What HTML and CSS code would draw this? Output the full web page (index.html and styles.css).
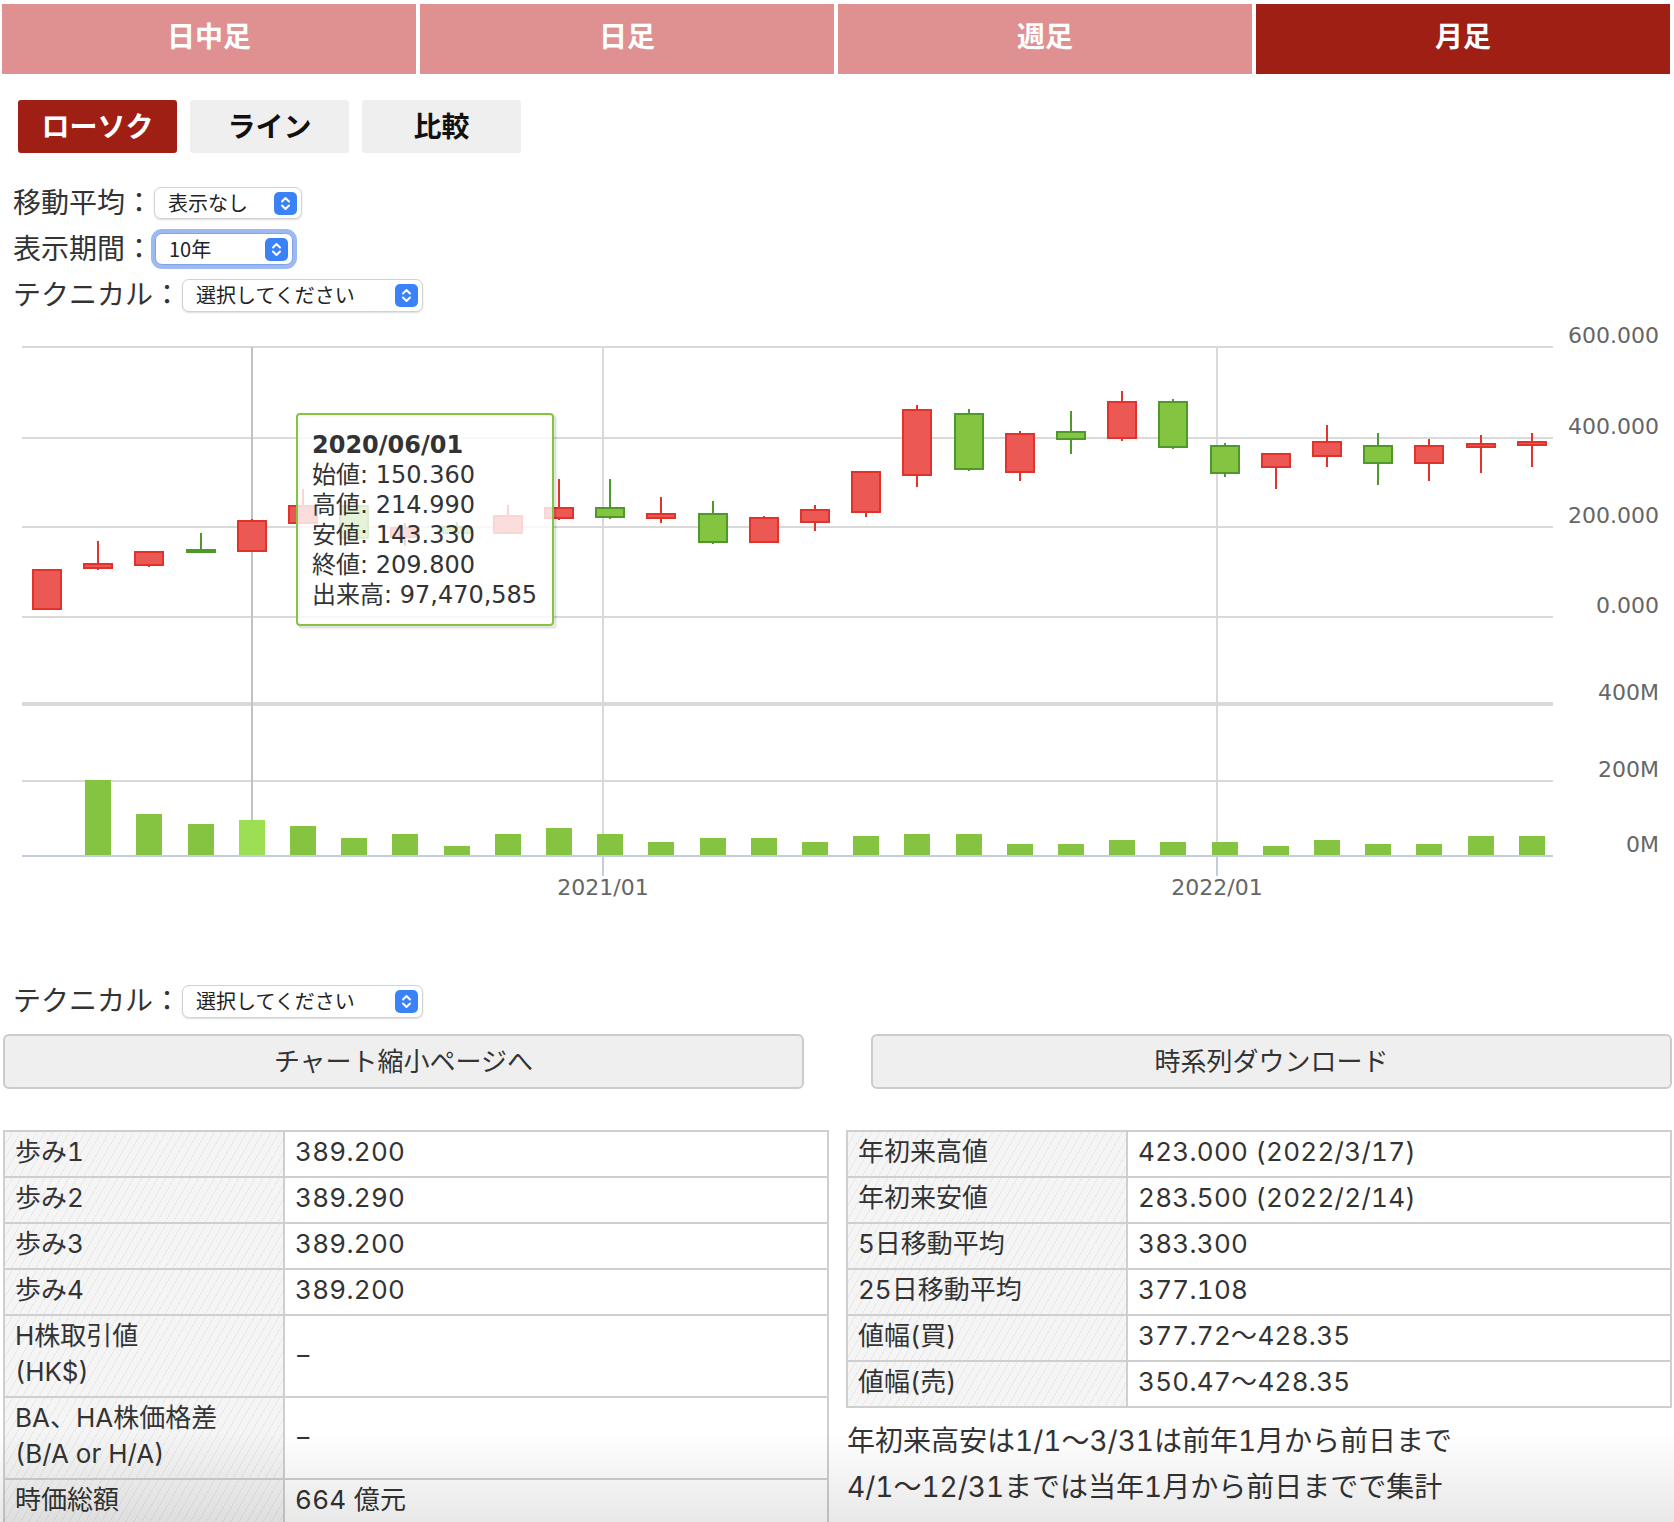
FILE: index.html
```html
<!DOCTYPE html>
<html lang="ja">
<head>
<meta charset="utf-8">
<title>チャート</title>
<link rel="stylesheet" href="styles.css">
</head>
<body>
<nav class="period-tabs">
  <div class="period-tab">日中足</div>
  <div class="period-tab">日足</div>
  <div class="period-tab">週足</div>
  <div class="period-tab active">月足</div>
</nav>

<div class="chart-types">
  <div class="chart-type active">ローソク</div>
  <div class="chart-type">ライン</div>
  <div class="chart-type">比較</div>
</div>

<div class="controls top">
  <div class="control-row">
    <span class="control-label">移動平均：</span>
    <span class="select w-ma"><span class="select-text">表示なし</span><svg class="select-arrow" width="23" height="23" viewBox="0 0 23 23"><rect width="23" height="23" rx="5" fill="#3b82f6"/><path d="M8 9.5 11.5 6 15 9.5M8 13.5 11.5 17 15 13.5" fill="none" stroke="#fff" stroke-width="2" stroke-linecap="round" stroke-linejoin="round"/></svg></span>
  </div>
  <div class="control-row">
    <span class="control-label">表示期間：</span>
    <span class="select w-period focused"><span class="select-text">10年</span><svg class="select-arrow" width="23" height="23" viewBox="0 0 23 23"><rect width="23" height="23" rx="5" fill="#3b82f6"/><path d="M8 9.5 11.5 6 15 9.5M8 13.5 11.5 17 15 13.5" fill="none" stroke="#fff" stroke-width="2" stroke-linecap="round" stroke-linejoin="round"/></svg></span>
  </div>
  <div class="control-row">
    <span class="control-label">テクニカル：</span>
    <span class="select w-tech"><span class="select-text">選択してください</span><svg class="select-arrow" width="23" height="23" viewBox="0 0 23 23"><rect width="23" height="23" rx="5" fill="#3b82f6"/><path d="M8 9.5 11.5 6 15 9.5M8 13.5 11.5 17 15 13.5" fill="none" stroke="#fff" stroke-width="2" stroke-linecap="round" stroke-linejoin="round"/></svg></span>
  </div>
</div>

<svg class="chart" viewBox="0 318 1674 660" width="1674" height="660">
  <g class="grid">
    <line x1="22" y1="347" x2="1553" y2="347"/>
    <line x1="22" y1="438" x2="1553" y2="438"/>
    <line x1="22" y1="527" x2="1553" y2="527"/>
    <line x1="22" y1="617" x2="1553" y2="617"/>
    <line x1="22" y1="781" x2="1553" y2="781"/>
    <line class="thick" x1="22" y1="704" x2="1553" y2="704"/>
    <line x1="603" y1="347" x2="603" y2="856"/>
    <line x1="1217" y1="347" x2="1217" y2="856"/>
  </g>
  <line class="crosshair" x1="252" y1="347" x2="252" y2="856"/>
  <g class="axis-line">
    <line x1="22" y1="856" x2="1553" y2="856"/>
    <line x1="603" y1="856" x2="603" y2="876"/>
    <line x1="1217" y1="856" x2="1217" y2="876"/>
  </g>

  <g class="vol">
    <rect x="85" y="780" width="26" height="75"/>
    <rect x="136" y="814" width="26" height="41"/>
    <rect x="188" y="824" width="26" height="31"/>
    <rect class="hover" x="239" y="820" width="26" height="35"/>
    <rect x="290" y="826" width="26" height="29"/>
    <rect x="341" y="838" width="26" height="17"/>
    <rect x="392" y="834" width="26" height="21"/>
    <rect x="444" y="846" width="26" height="9"/>
    <rect x="495" y="834" width="26" height="21"/>
    <rect x="546" y="828" width="26" height="27"/>
    <rect x="597" y="834" width="26" height="21"/>
    <rect x="648" y="842" width="26" height="13"/>
    <rect x="700" y="838" width="26" height="17"/>
    <rect x="751" y="838" width="26" height="17"/>
    <rect x="802" y="842" width="26" height="13"/>
    <rect x="853" y="836" width="26" height="19"/>
    <rect x="904" y="834" width="26" height="21"/>
    <rect x="956" y="834" width="26" height="21"/>
    <rect x="1007" y="844" width="26" height="11"/>
    <rect x="1058" y="844" width="26" height="11"/>
    <rect x="1109" y="840" width="26" height="15"/>
    <rect x="1160" y="842" width="26" height="13"/>
    <rect x="1212" y="842" width="26" height="13"/>
    <rect x="1263" y="846" width="26" height="9"/>
    <rect x="1314" y="840" width="26" height="15"/>
    <rect x="1365" y="844" width="26" height="11"/>
    <rect x="1416" y="844" width="26" height="11"/>
    <rect x="1468" y="836" width="26" height="19"/>
    <rect x="1519" y="836" width="26" height="19"/>
  </g>

  <g class="candles">
    <rect class="up" x="33" y="570" width="28" height="39"/>
    <line class="wu" x1="98" y1="541" x2="98" y2="570"/><rect class="up" x="84" y="564" width="28" height="4"/>
    <line class="wu" x1="149" y1="552" x2="149" y2="567"/><rect class="up" x="135" y="552" width="28" height="13"/>
    <line class="wd" x1="201" y1="533" x2="201" y2="552"/><rect class="dn" x="187" y="550" width="28" height="2"/>
    <line class="wu" x1="252" y1="519" x2="252" y2="552"/><rect class="up" x="238" y="521" width="28" height="30"/>
    <line class="wu" x1="303" y1="489" x2="303" y2="523"/><rect class="up" x="289" y="506" width="28" height="17"/>
    <line class="wd" x1="354" y1="504" x2="354" y2="540"/><rect class="dn" x="340" y="506" width="28" height="32"/>
    <line class="wu" x1="405" y1="523" x2="405" y2="546"/><rect class="up" x="391" y="528" width="28" height="9"/>
    <line class="wd" x1="457" y1="522" x2="457" y2="535"/><rect class="dn" x="443" y="527" width="28" height="6"/>
    <line class="wu" x1="508" y1="505" x2="508" y2="533"/><rect class="up" x="494" y="516" width="28" height="17"/>
    <line class="wu" x1="559" y1="479" x2="559" y2="520"/><rect class="up" x="545" y="508" width="28" height="10"/>
    <line class="wd" x1="610" y1="479" x2="610" y2="519"/><rect class="dn" x="596" y="508" width="28" height="9"/>
    <line class="wu" x1="661" y1="497" x2="661" y2="523"/><rect class="up" x="647" y="514" width="28" height="4"/>
    <line class="wd" x1="713" y1="501" x2="713" y2="544"/><rect class="dn" x="699" y="514" width="28" height="28"/>
    <line class="wu" x1="764" y1="516" x2="764" y2="542"/><rect class="up" x="750" y="518" width="28" height="24"/>
    <line class="wu" x1="815" y1="505" x2="815" y2="531"/><rect class="up" x="801" y="510" width="28" height="12"/>
    <line class="wu" x1="866" y1="472" x2="866" y2="517"/><rect class="up" x="852" y="472" width="28" height="40"/>
    <line class="wu" x1="917" y1="405" x2="917" y2="487"/><rect class="up" x="903" y="410" width="28" height="65"/>
    <line class="wd" x1="969" y1="409" x2="969" y2="471"/><rect class="dn" x="955" y="414" width="28" height="55"/>
    <line class="wu" x1="1020" y1="431" x2="1020" y2="481"/><rect class="up" x="1006" y="434" width="28" height="38"/>
    <line class="wd" x1="1071" y1="411" x2="1071" y2="454"/><rect class="dn" x="1057" y="432" width="28" height="7"/>
    <line class="wu" x1="1122" y1="391" x2="1122" y2="441"/><rect class="up" x="1108" y="402" width="28" height="36"/>
    <line class="wd" x1="1173" y1="399" x2="1173" y2="449"/><rect class="dn" x="1159" y="402" width="28" height="45"/>
    <line class="wd" x1="1225" y1="443" x2="1225" y2="477"/><rect class="dn" x="1211" y="446" width="28" height="27"/>
    <line class="wu" x1="1276" y1="454" x2="1276" y2="489"/><rect class="up" x="1262" y="454" width="28" height="13"/>
    <line class="wu" x1="1327" y1="425" x2="1327" y2="467"/><rect class="up" x="1313" y="442" width="28" height="14"/>
    <line class="wd" x1="1378" y1="433" x2="1378" y2="485"/><rect class="dn" x="1364" y="446" width="28" height="17"/>
    <line class="wu" x1="1429" y1="439" x2="1429" y2="481"/><rect class="up" x="1415" y="446" width="28" height="17"/>
    <line class="wu" x1="1481" y1="435" x2="1481" y2="473"/><rect class="up" x="1467" y="444" width="28" height="3"/>
    <line class="wu" x1="1532" y1="433" x2="1532" y2="467"/><rect class="up" x="1518" y="442" width="28" height="3"/>
  </g>

  <g class="axis-text">
    <text class="yl" x="1659" y="343">600.000</text>
    <text class="yl" x="1659" y="434">400.000</text>
    <text class="yl" x="1659" y="523">200.000</text>
    <text class="yl" x="1659" y="613">0.000</text>
    <text class="yl" x="1659" y="700">400M</text>
    <text class="yl" x="1659" y="777">200M</text>
    <text class="yl" x="1659" y="852">0M</text>
    <text class="xl" x="603" y="895">2021/01</text>
    <text class="xl" x="1217" y="895">2022/01</text>
  </g>

  <g class="tooltip">
    <rect class="tt-shadow" x="300" y="417" width="256" height="211" rx="3"/>
    <rect class="tt-shadow2" x="299" y="416" width="256" height="211" rx="3"/>
    <rect class="tt-box" x="297" y="414" width="256" height="211" rx="3"/>
    <text class="tt-title" x="312" y="453">2020/06/01</text>
    <text class="tt-line" x="312" y="483">始値: 150.360</text>
    <text class="tt-line" x="312" y="513">高値: 214.990</text>
    <text class="tt-line" x="312" y="543">安値: 143.330</text>
    <text class="tt-line" x="312" y="573">終値: 209.800</text>
    <text class="tt-line" x="312" y="603">出来高: 97,470,585</text>
  </g>
</svg>

<div class="controls bottom">
  <div class="control-row">
    <span class="control-label">テクニカル：</span>
    <span class="select w-tech"><span class="select-text">選択してください</span><svg class="select-arrow" width="23" height="23" viewBox="0 0 23 23"><rect width="23" height="23" rx="5" fill="#3b82f6"/><path d="M8 9.5 11.5 6 15 9.5M8 13.5 11.5 17 15 13.5" fill="none" stroke="#fff" stroke-width="2" stroke-linecap="round" stroke-linejoin="round"/></svg></span>
  </div>
</div>

<div class="action-row">
  <div class="action-btn">チャート縮小ページへ</div>
  <div class="action-btn">時系列ダウンロード</div>
</div>

<div class="tables">
  <table class="info">
    <tr><th>歩み1</th><td>389.200</td></tr>
    <tr><th>歩み2</th><td>389.290</td></tr>
    <tr><th>歩み3</th><td>389.200</td></tr>
    <tr><th>歩み4</th><td>389.200</td></tr>
    <tr><th><span class="line">H株取引値</span><span class="line">(HK$)</span></th><td class="dash">--</td></tr>
    <tr><th><span class="line">BA、HA株価格差</span><span class="line">(B/A or H/A)</span></th><td class="dash">--</td></tr>
    <tr><th>時価総額</th><td>664 億元</td></tr>
  </table>
  <div class="right-col">
    <table class="info">
      <tr><th>年初来高値</th><td>423.000 (2022/3/17)</td></tr>
      <tr><th>年初来安値</th><td>283.500 (2022/2/14)</td></tr>
      <tr><th>5日移動平均</th><td>383.300</td></tr>
      <tr><th>25日移動平均</th><td>377.108</td></tr>
      <tr><th>値幅(買)</th><td>377.72〜428.35</td></tr>
      <tr><th>値幅(売)</th><td>350.47〜428.35</td></tr>
    </table>
    <p class="note"><span class="line">年初来高安は1/1〜3/31は前年1月から前日まで</span><span class="line">4/1〜12/31までは当年1月から前日までで集計</span></p>
  </div>
</div>

<div class="bottom-fade"></div>
</body>
</html>
```

FILE: styles.css
```css
html, body {
  margin: 0;
  padding: 0;
  background: #fff;
}
body {
  font-family: "Noto Sans CJK JP", "Noto Sans", sans-serif;
  color: #333;
  width: 1674px;
  padding-bottom: 200px;
}

/* period tabs */
.period-tabs {
  display: flex;
  gap: 4px;
  padding: 4px 4px 0 2px;
}
.period-tab {
  flex: 1;
  height: 70px;
  box-sizing: border-box;
  padding-bottom: 9px;
  display: flex;
  align-items: center;
  justify-content: center;
  background: #df9191;
  color: #fff;
  font-weight: bold;
  font-size: 28px;
}
.period-tab.active {
  background: #9f1f15;
}

/* chart type buttons */
.chart-types {
  display: flex;
  gap: 13px;
  padding: 26px 0 0 18px;
}
.chart-type {
  width: 159px;
  height: 53px;
  box-sizing: border-box;
  padding-bottom: 4px;
  border-radius: 3px;
  background: #efefef;
  color: #111;
  font-size: 28px;
  font-weight: bold;
  display: flex;
  align-items: center;
  justify-content: center;
}
.chart-type.active {
  background: #9f1f15;
  color: #fff;
}

/* controls */
.controls {
  padding-left: 13px;
}
.controls.top {
  padding-top: 27px;
}
.control-row {
  height: 46px;
  display: flex;
  align-items: center;
}
.control-label {
  font-size: 28px;
  line-height: 1;
  color: #333;
  margin-bottom: 4px;
}
.select {
  display: flex;
  align-items: center;
  justify-content: space-between;
  box-sizing: border-box;
  height: 32px;
  padding: 0 4px 0 13px;
  margin-left: 1px;
  border: 1px solid #d2d2d2;
  border-radius: 7px;
  background: #fff;
  box-shadow: 0 1px 2px rgba(0, 0, 0, 0.14);
  font-size: 20px;
  color: #222;
}
.select-text {
  line-height: 1;
}
.select-arrow {
  flex: none;
  display: block;
}
.w-ma { width: 148px; }
.w-period { width: 138px; margin-left: 2px; }
.w-tech { width: 241px; height: 33px; }
.select.focused {
  box-shadow: 0 0 0 4px #9db9f2;
  border-color: #7fa4ee;
}

/* chart */
.chart {
  display: block;
  width: 1674px;
  height: 660px;
}
.grid line {
  stroke: #d9d9d9;
  stroke-width: 2;
}
.grid line.thick {
  stroke-width: 4;
}
.crosshair {
  stroke: #c2c2c2;
  stroke-width: 2;
}
.axis-line line {
  stroke: #c3cde0;
  stroke-width: 2;
}
.vol rect {
  fill: #84c441;
}
.vol rect.hover {
  fill: #9ddf52;
}
.candles .up {
  fill: #ec5853;
  stroke: #e1322b;
  stroke-width: 2;
}
.candles .dn {
  fill: #84c441;
  stroke: #4d9a2a;
  stroke-width: 2;
}
.candles .wu {
  stroke: #e1322b;
  stroke-width: 2;
}
.candles .wd {
  stroke: #4d9a2a;
  stroke-width: 2;
}
.axis-text text {
  font-family: "DejaVu Sans", "Noto Sans CJK JP", sans-serif;
  font-size: 22px;
  fill: #666;
}
.axis-text .yl {
  text-anchor: end;
}
.axis-text .xl {
  text-anchor: middle;
}
.tt-shadow {
  fill: none;
  stroke: rgba(0, 0, 0, 0.05);
  stroke-width: 3;
}
.tt-shadow2 {
  fill: none;
  stroke: rgba(0, 0, 0, 0.08);
  stroke-width: 2;
}
.tt-box {
  fill: rgba(255, 255, 255, 0.8);
  stroke: #84c441;
  stroke-width: 2;
}
.tooltip text {
  font-family: "DejaVu Sans", "Noto Sans CJK JP", sans-serif;
  font-size: 24px;
  fill: #333;
}
.tooltip .tt-title {
  font-weight: bold;
}

/* action buttons */
.action-row {
  display: flex;
  justify-content: space-between;
  padding: 0 2px 0 3px;
  margin-top: 10px;
}
.action-btn {
  width: 801px;
  height: 55px;
  box-sizing: border-box;
  padding-bottom: 4px;
  border: 2px solid #cbcbcb;
  border-radius: 6px;
  background: #efefef;
  color: #333;
  font-size: 26px;
  display: flex;
  align-items: center;
  justify-content: center;
}

/* info tables */
.tables {
  display: flex;
  justify-content: space-between;
  align-items: flex-start;
  padding: 0 2px 0 3px;
  margin-top: 41px;
}
.right-col {
  width: 826px;
}
table.info {
  width: 826px;
  border-collapse: collapse;
  font-family: Inter, "Noto Sans CJK JP", sans-serif;
  font-variant-numeric: tabular-nums;
  font-size: 26px;
  color: #333;
}
.info th,
.info td {
  border: 2px solid #cfcfcf;
  padding: 2px 10px 6px;
  line-height: 36px;
  height: 36px;
  text-align: left;
  font-weight: normal;
  vertical-align: middle;
}
.info td {
  letter-spacing: 0.3px;
}
.info td.dash {
  font-family: "Liberation Sans", sans-serif;
  font-variant-numeric: normal;
  letter-spacing: -3px;
  padding-left: 11px;
}
.info th {
  width: 258px;
  box-sizing: content-box;
  background: repeating-linear-gradient(120deg, #f5f5f5 0 6px, #e9e9e9 6px 7px);
}
.line {
  display: block;
  height: 36px;
}
.note {
  margin: 10px 0 0 1px;
  font-family: Inter, "Noto Sans CJK JP", sans-serif;
  font-variant-numeric: tabular-nums;
  font-size: 28px;
  line-height: 46px;
  color: #333;
}
.note .line {
  height: 46px;
}

.bottom-fade {
  position: fixed;
  left: 0;
  right: 0;
  bottom: 0;
  height: 90px;
  background: linear-gradient(rgba(0, 0, 0, 0), rgba(0, 0, 0, 0.09));
  pointer-events: none;
}
```
